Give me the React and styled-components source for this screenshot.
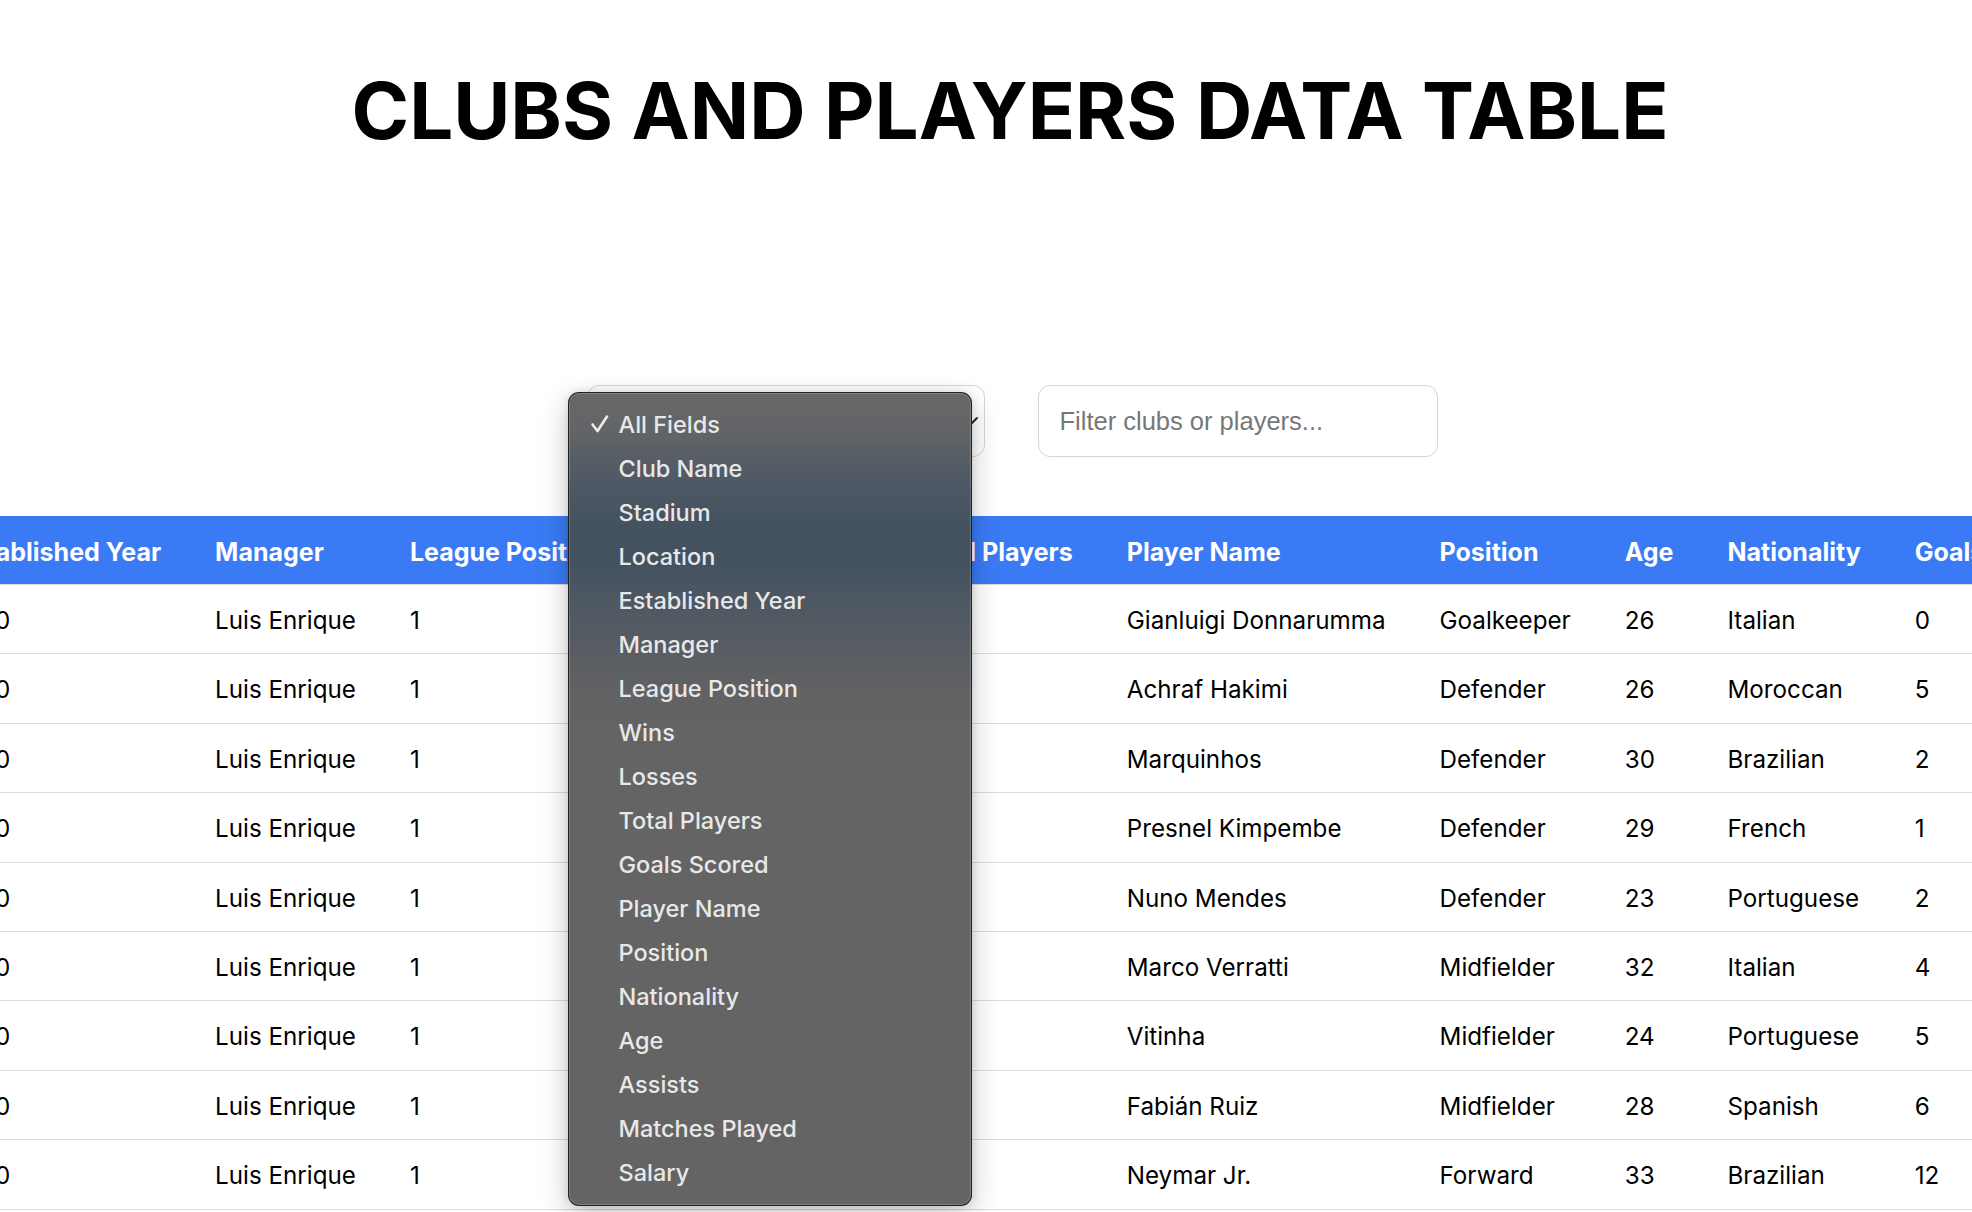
import React, { useLayoutEffect, useRef } from "react";
import styled, { createGlobalStyle } from "styled-components";

const GlobalStyle = createGlobalStyle`
  html, body {
    margin: 0;
    padding: 0;
    background: #ffffff;
  }
  body {
    font-family: Inter, "Noto Sans", sans-serif;
    color: #000000;
    overflow-x: hidden;
  }
`;

const FIELDS = [
  "All Fields",
  "Club Name",
  "Stadium",
  "Location",
  "Established Year",
  "Manager",
  "League Position",
  "Wins",
  "Losses",
  "Total Players",
  "Goals Scored",
  "Player Name",
  "Position",
  "Nationality",
  "Age",
  "Assists",
  "Matches Played",
  "Salary",
];

const COLUMNS = [
  "Club Name",
  "Stadium",
  "Location",
  "Established Year",
  "Manager",
  "League Position",
  "Wins",
  "Losses",
  "Total Players",
  "Player Name",
  "Position",
  "Age",
  "Nationality",
  "Goals",
  "Assists",
  "Matches Played",
  "Salary",
];

const club = ["Paris Saint-Germain", "Parc des Princes", "Paris, France", 1970, "Luis Enrique", 1, 26, 2, 25];

const players = [
  ["Gianluigi Donnarumma", "Goalkeeper", 26, "Italian", 0, 0, 30, "€7,000,000"],
  ["Achraf Hakimi", "Defender", 26, "Moroccan", 5, 8, 32, "€10,000,000"],
  ["Marquinhos", "Defender", 30, "Brazilian", 2, 1, 31, "€9,500,000"],
  ["Presnel Kimpembe", "Defender", 29, "French", 1, 0, 18, "€6,000,000"],
  ["Nuno Mendes", "Defender", 23, "Portuguese", 2, 4, 27, "€5,500,000"],
  ["Marco Verratti", "Midfielder", 32, "Italian", 4, 6, 29, "€8,000,000"],
  ["Vitinha", "Midfielder", 24, "Portuguese", 5, 7, 33, "€6,500,000"],
  ["Fabián Ruiz", "Midfielder", 28, "Spanish", 6, 5, 30, "€6,000,000"],
  ["Neymar Jr.", "Forward", 33, "Brazilian", 12, 10, 22, "€30,000,000"],
  ["Kylian Mbappé", "Forward", 26, "French", 30, 9, 34, "€36,000,000"],
  ["Ousmane Dembélé", "Forward", 28, "French", 14, 11, 32, "€12,000,000"],
];

export default function App() {
  const scrollRef = useRef(null);
  const anchorRef = useRef(null);

  // table is scrolled sideways so the Manager column text starts at x=215
  useLayoutEffect(() => {
    if (scrollRef.current && anchorRef.current) {
      scrollRef.current.scrollLeft = anchorRef.current.offsetLeft + 27 - 215;
    }
  }, []);

  return (
    <Page>
      <GlobalStyle />
      <Title>CLUBS AND PLAYERS DATA TABLE</Title>

      <Controls>
        <SelectWrap>
          <FieldSelect defaultValue="All Fields">
            {FIELDS.map((f) => (
              <option key={f}>{f}</option>
            ))}
          </FieldSelect>
          <Chevron width="14" height="10" viewBox="0 0 14 10">
            <polyline points="2,2 7,7 12,2" fill="none" stroke="#222" strokeWidth="1.8" strokeLinecap="round" strokeLinejoin="round" />
          </Chevron>

          <Menu>
            {FIELDS.map((f, i) => (
              <MenuItem key={f}>
                <CheckSlot>
                  {i === 0 && (
                    <svg width="20" height="20" viewBox="0 0 20 20">
                      <polyline points="2.5,10.5 7.5,17 17,2.5" fill="none" stroke="#ececec" strokeWidth="2.6" strokeLinecap="round" strokeLinejoin="round" />
                    </svg>
                  )}
                </CheckSlot>
                {f}
              </MenuItem>
            ))}
          </Menu>
        </SelectWrap>

        <Search placeholder="Filter clubs or players..." />
      </Controls>

      <TableScroller ref={scrollRef}>
        <Table>
          <thead>
            <tr>
              {COLUMNS.map((c) => (
                <Th key={c} ref={c === "Manager" ? anchorRef : undefined}>
                  {c}
                </Th>
              ))}
            </tr>
          </thead>
          <tbody>
            {players.map((p) => (
              <tr key={p[0]}>
                {club.map((v, i) => (
                  <Td key={"c" + i}>{v}</Td>
                ))}
                {p.map((v, i) => (
                  <Td key={"p" + i}>{v}</Td>
                ))}
              </tr>
            ))}
          </tbody>
        </Table>
      </TableScroller>
    </Page>
  );
}

const Page = styled.div`
  padding-top: 63px;
`;

const Title = styled.h1`
  margin: 0;
  padding-left: 48px;
  text-align: center;
  font-size: 78px;
  line-height: 96px;
  font-weight: 700;
  letter-spacing: 0;
  color: #000;
`;

const Controls = styled.div`
  display: flex;
  justify-content: center;
  gap: 53px;
  margin-top: 226px;
  padding-left: 52px;
`;

const SelectWrap = styled.div`
  position: relative;
  width: 398px;
  height: 72px;
`;

const FieldSelect = styled.select`
  appearance: none;
  -webkit-appearance: none;
  box-sizing: border-box;
  width: 100%;
  height: 100%;
  border: 1px solid #d6d6d6;
  border-radius: 12px;
  background: #ffffff;
  padding: 0 40px 0 20px;
  font-family: Inter, sans-serif;
  font-size: 23px;
  color: #000;
`;

const Chevron = styled.svg`
  position: absolute;
  right: 6px;
  top: 31px;
  pointer-events: none;
`;

const Menu = styled.ul`
  position: absolute;
  top: 7px;
  left: -19px;
  z-index: 10;
  box-sizing: border-box;
  width: 404px;
  margin: 0;
  padding: 9px 0 11px;
  list-style: none;
  border-radius: 11px;
  border: 1px solid rgba(20, 20, 20, 0.85);
  background: linear-gradient(
    180deg,
    #676767 0px,
    #626467 40px,
    #4e5864 90px,
    #44525f 135px,
    #44525f 170px,
    #4a5662 195px,
    #585c62 250px,
    #616263 300px,
    #646464 340px,
    #646464 100%
  );
  box-shadow: inset 0 0 0 1px rgba(255, 255, 255, 0.18), 0 10px 30px rgba(0, 0, 0, 0.22),
    0 0 8px rgba(0, 0, 0, 0.12);
`;

const MenuItem = styled.li`
  display: flex;
  align-items: center;
  height: 44px;
  padding-left: 21px;
  font-size: 23.5px;
  font-weight: 500;
  color: #e8e8e8;
  white-space: nowrap;
`;

const CheckSlot = styled.span`
  display: flex;
  align-items: center;
  width: 29px;
  flex-shrink: 0;
`;

const Search = styled.input`
  box-sizing: border-box;
  width: 400px;
  height: 72px;
  border: 1px solid #d6d6d6;
  border-radius: 12px;
  padding: 0 21px;
  font-family: "Liberation Sans", Arial, sans-serif;
  font-size: 25.5px;
  color: #000;
  outline: none;

  &::placeholder {
    color: #777777;
  }
`;

const TableScroller = styled.div`
  margin-top: 59px;
  overflow-x: auto;
  scrollbar-width: none;

  &::-webkit-scrollbar {
    display: none;
  }
`;

const Table = styled.table`
  border-collapse: collapse;
  white-space: nowrap;
  font-size: 24.2px;
`;

const Th = styled.th`
  background: #3a7bf5;
  color: #ffffff;
  font-size: 25px;
  font-weight: 700;
  text-align: left;
  padding: 22px 27px 18px;
  line-height: 28px;
  border-bottom: 1px solid #dddddd;
`;

const Td = styled.td`
  padding: 22px 27px 18px;
  line-height: 28.4px;
  border-bottom: 1px solid #dddddd;
  color: #000;
`;
